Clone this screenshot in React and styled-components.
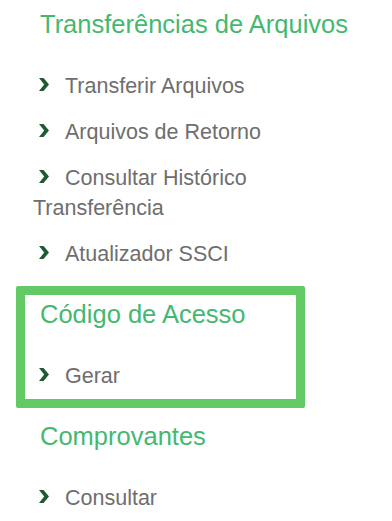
import React from 'react'
import styled, { createGlobalStyle } from 'styled-components'

const colors = {
  heading: '#45b870',
  text: '#6e6e6e',
  arrow: '#1d5a32',
  highlight: '#62c964',
}

const font = '"Liberation Sans", Arial, sans-serif'

const GlobalStyle = createGlobalStyle`
  body {
    margin: 0;
    background: #fff;
    font-family: ${font};
  }
`

const Menu = styled.nav`
  display: flex;
  flex-direction: column;
`

const Section = styled.section`
  box-sizing: border-box;
  width: 289px;
  margin-left: 16px;
  padding: 6px 8px 8px;
  border: 9px solid ${props => (props.highlight ? colors.highlight : 'transparent')};
  border-radius: 2px;

  &:first-child {
    padding-top: 2px;
  }
`

const Heading = styled.h2`
  margin: 0;
  padding-left: 7px;
  font-size: 25.5px;
  line-height: 26px;
  font-weight: normal;
  color: ${colors.heading};
  white-space: nowrap;
`

const List = styled.ul`
  list-style: none;
  margin: 0;
  padding: 34px 0 0;
  display: flex;
  flex-direction: column;
  gap: 16px;
`

const Item = styled.li`
  font-size: 21.5px;
  line-height: 30px;
  color: ${colors.text};
`

const Arrow = styled.svg`
  display: inline-block;
  width: 10px;
  height: 13px;
  margin-left: 6px;
  margin-right: 16px;
  vertical-align: 2px;
  fill: ${colors.arrow};
`

const Chevron = () => (
  <Arrow viewBox="0 0 10 13">
    <polygon points="0,0 4.5,0 10,6.5 4.5,13 0,13 5.2,6.5" />
  </Arrow>
)

const sections = [
  {
    title: 'Transferências de Arquivos',
    items: ['Transferir Arquivos', 'Arquivos de Retorno', 'Consultar Histórico Transferência', 'Atualizador SSCI'],
  },
  { title: 'Código de Acesso', items: ['Gerar'], highlight: true },
  { title: 'Comprovantes', items: ['Consultar'] },
]

export default function App() {
  return (
    <>
      <GlobalStyle />
      <Menu>
        {sections.map(section => (
          <Section key={section.title} highlight={section.highlight}>
            <Heading>{section.title}</Heading>
            <List>
              {section.items.map(item => (
                <Item key={item}>
                  <Chevron />
                  {item}
                </Item>
              ))}
            </List>
          </Section>
        ))}
      </Menu>
    </>
  )
}
